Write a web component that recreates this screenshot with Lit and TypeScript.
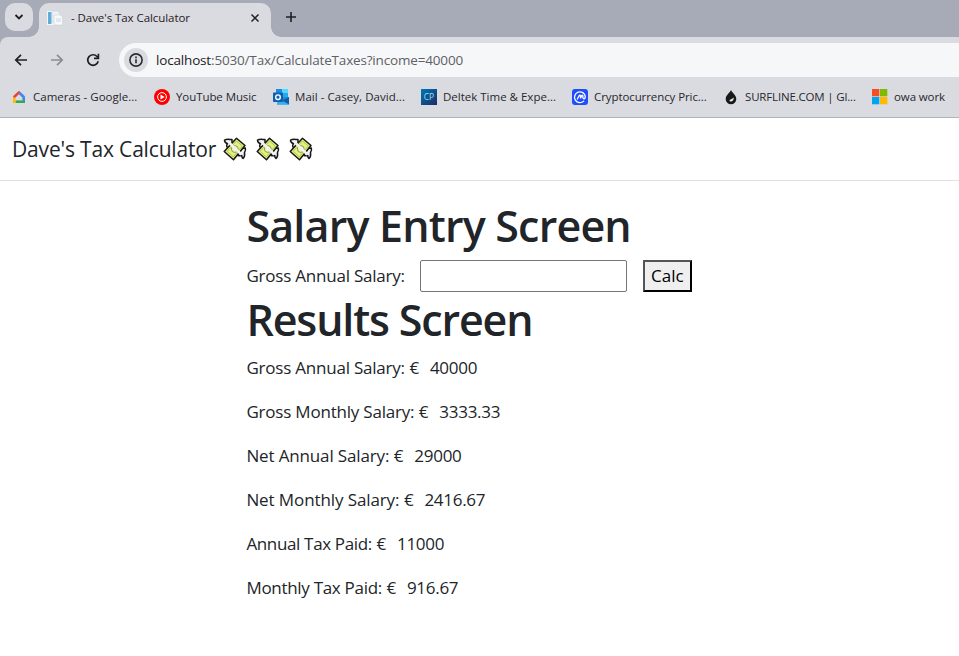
import { LitElement, html, css, svg } from "lit";
import { customElement } from "lit/decorators.js";

const google = svg`<svg width="16" height="16" viewBox="0 0 16 16" fill="none" stroke-width="2.6"><path d="M3.400 7.800 8 3.400" stroke="#ea4335" stroke-linecap="round"/><path d="M8.600 4 12.700 8V12" stroke="#4285f4" stroke-linejoin="round"/><path d="M4.500 12.700h9.500" stroke="#34a853"/><path d="M3.300 8.500V12.700h1.500" stroke="#fbbc04"/></svg>`;
const youtube = svg`<svg width="16" height="16" viewBox="0 0 16 16"><circle cx="8" cy="8" r="8" fill="#f00"/><circle cx="8" cy="8" r="4.400" fill="none" stroke="#fff" stroke-width="1"/><path d="M6.500 5.500 10.600 8l-4.100 2.500z" fill="#fff"/></svg>`;
const outlook = svg`<svg width="16" height="16" viewBox="0 0 16 16"><path d="M3 0h12v8H3z" fill="#1490df"/><path d="M9 0h6v4H9z" fill="#50d9ff"/><path d="M3 4h6v4H3z" fill="#0a5ca5"/><path d="M9 4h6v4H9z" fill="#28a8ea"/><path d="M4 8h12v7.500H4z" fill="#1a8fe0"/><path d="M16 8v7.500L9 11.500z" fill="#0f5fa8"/><path d="m4 9 12 6.500H4z" fill="#35b0f0"/><rect y="3.500" width="10" height="9.500" rx=".7" fill="#0f5fb5"/><circle cx="5" cy="8.200" r="2.300" fill="none" stroke="#fff" stroke-width="1.400"/></svg>`;
const deltek = svg`<svg width="16" height="16" viewBox="0 0 16 16"><defs><linearGradient id="g" x2="1" y2="1"><stop stop-color="#0078b4"/><stop offset="1" stop-color="#1d2a63"/></linearGradient></defs><path d="M0 0h16v16H0z" fill="url(#g)"/><text x="8" y="11.200" text-anchor="middle" font-family="Open Sans, sans-serif" font-size="8.500" fill="#9ddcf5">CP</text></svg>`;
const coin = svg`<svg width="16" height="16" viewBox="0 0 16 16"><rect width="16" height="16" rx="3" fill="#1f4dfb"/><path d="M11.700 12.100a5.400 5.400 0 1 1 1.600-4.500c.1 2.600-2.200 2.800-2.400 1V7.100c0-1-.8-1.100-1.200-.3L8.500 9.200V7c0-1-.8-1.100-1.300-.3L5.300 10" fill="none" stroke="#fff" stroke-width="1.300" stroke-linecap="round"/></svg>`;
const surf = svg`<svg width="16" height="16" viewBox="0 0 16 16"><path d="M8 1c1 2.700 5.300 5.200 5.300 9a5.300 5.300 0 0 1-10.600 0C2.700 6.200 7 3.700 8 1z" fill="#191919"/><path d="M10.700 8.200c-.2 1.600-3.800 1.600-4.300 3.600.8 1.500 4.900.4 4.300-3.600z" fill="#e6e7ea"/></svg>`;
const windows = svg`<svg width="16" height="16" viewBox="0 0 16 16"><path d="M0 0h7.300v7.300H0z" fill="#f25022"/><path d="M8 0h7.300v7.300H8z" fill="#7fba00"/><path d="M0 8h7.300v7.300H0z" fill="#00a4ef"/><path d="M8 8h7.300v7.300H8z" fill="#ffb900"/></svg>`;

const bookmarks = [
  { name: "Cameras - Google...", icon: google, width: 143, spacing: 0.03 },
  { name: "YouTube Music", icon: youtube, width: 119, spacing: -0.08 },
  { name: "Mail - Casey, David...", icon: outlook, width: 148, spacing: 0.045 },
  { name: "Deltek Time & Expe...", icon: deltek, width: 151, spacing: 0 },
  { name: "Cryptocurrency Pric...", icon: coin, width: 151, spacing: -0.09 },
  { name: "SURFLINE.COM | Gl...", icon: surf, width: 149, spacing: -0.17 },
  { name: "owa work", icon: windows, width: 80, spacing: -0.1 },
];

const results = [
  { label: "Gross Annual Salary:", value: "40000", spacing: -0.215 },
  { label: "Gross Monthly Salary:", value: "3333.33", spacing: -0.205 },
  { label: "Net Annual Salary:", value: "29000", spacing: -0.14 },
  { label: "Net Monthly Salary:", value: "2416.67", spacing: -0.1 },
  { label: "Annual Tax Paid:", value: "11000", spacing: -0.35 },
  { label: "Monthly Tax Paid:", value: "916.67", spacing: -0.3 },
];

const money = svg`<svg class="money" width="24" height="24" viewBox="0 0 24 24" stroke-linejoin="round"><path d="M1.500 3.200C3.500 1.800 6 2.500 9 2.500L9 8 5 10.500C3 10 3.500 8 4.500 6.800 2.800 6 1.500 4.800 1.500 3.200z" fill="#f4f4f4" stroke="#181818" stroke-width="1.500"/><path d="M15 18.500l4-7 3.300-.5c.5 1.500.3 3-.8 4.500.3 2-.2 4.800-1.500 6-1-.8-1.200-2-1.200-3-1.500.5-3.100.3-3.800 0z" fill="#f4f4f4" stroke="#181818" stroke-width="1.500"/><path d="M13.500 1.200 22 8.500 10.500 22.800 1.200 14.500z" fill="#e4f17c" stroke="#181818" stroke-width="1.500"/><path d="M13.500 4 19.300 9 10.300 20 4.200 14.300z" fill="none" stroke="#b5c160" stroke-width="1"/><circle cx="11.800" cy="12" r="3.400" fill="#f0f8b0" stroke="#8c9a58" stroke-width="1"/><path d="m7 6.500 11.500 11" stroke="#f3f3f3" stroke-width="2.600"/></svg>`;

@customElement("app-root")
export class AppRoot extends LitElement {
  static styles = css`
    :host { display: block; height: 656px; overflow: hidden; background: #fff; color: #212529; font-family: "Open Sans", "Noto Sans", sans-serif; }
    * { box-sizing: border-box; }
    svg { display: block; flex: none; }
    .t { white-space: pre; }
    .tabs { height: 37px; background: #a7abb7; display: flex; }
    .search { width: 28px; height: 28px; margin: 3px 6px 0 5px; border-radius: 10px; background: #dadbe0; display: grid; place-items: center; }
    .tab { position: relative; width: 232px; height: 34px; margin-top: 3px; border-radius: 10px 10px 0 0; background: #dadbe0; display: flex; align-items: center; padding: 0 10px 5px 8px; font-size: 11.500px; letter-spacing: -0.065px; color: #1f2024; }
    .tab::before, .tab::after { content: ""; position: absolute; bottom: 0; width: 10px; height: 10px; }
    .tab::before { left: -10px; background: radial-gradient(circle at 0 0, transparent 9.500px, #dadbe0 10px); }
    .tab::after { right: -10px; background: radial-gradient(circle at 100% 0, transparent 9.500px, #dadbe0 10px); }
    .title { margin-left: 8px; flex: 1; }
    .plus { margin: 11px 0 0 14px; }
    .bar { height: 46px; background: #dadbe0; display: flex; align-items: center; border-radius: 8px 0 0 0; }
    .barwrap { background: #a7abb7; }
    .nav { display: flex; gap: 20px; padding-left: 13px; width: 119px; }
    .address { flex: 1; height: 34px; border-radius: 17px 0 0 17px; background: #f6f7f9; display: flex; align-items: center; padding-left: 5px; font-size: 13.500px; letter-spacing: -0.171px; color: #5e6165; }
    .info { width: 24px; height: 24px; border-radius: 50%; background: #dadbe0; display: grid; place-items: center; margin-right: 8px; }
    .host { color: #1f2024; }
    .marks { height: 35px; background: #dadbe0; border-bottom: 1px solid #b2b3b7; display: flex; align-items: center; padding: 0 0 7px 11px; font-size: 11.500px; color: #27282c; }
    .mark { display: flex; align-items: center; gap: 6px; flex: none; }
    .brand { height: 63px; border-bottom: 1px solid #dee2e6; display: flex; align-items: center; padding: 0 0 1px 12px; font-size: 21px; letter-spacing: -0.17px; }
    .brand .t { margin-right: 7px; }
    .money { margin-right: 9px; }
    main { padding: 17.600px 0 0 246.400px; font-size: 17px; line-height: 26.400px; }
    h1 { margin: 0; padding-top: 2px; font-size: 43px; font-weight: 600; line-height: 50.800px; letter-spacing: -0.803px; white-space: pre; }
    .results { letter-spacing: -1.144px; padding-top: 3px; line-height: 49.800px; }
    .entry { margin-top: 8.800px; height: 32px; display: flex; align-items: center; }
    .label { letter-spacing: -0.215px; padding-top: 1px; }
    input { width: 207px; height: 32px; margin: 0 16px 0 15px; border: 1px solid #767676; border-radius: 2px; background: #fff; }
    button { width: 49px; height: 32px; padding: 0; border: 2px solid; border-color: #555 #000 #000 #555; background: #efefef; color: #000; font: inherit; }
    button .t { display: block; padding-top: 1px; letter-spacing: 0.1px; }
    .rows { margin-top: 9.800px; display: grid; gap: 17.600px; }
    .row { display: flex; }
    .euro { width: 20.500px; margin-left: 4.500px; }
    .value { letter-spacing: -0.28px; }
  `;

  render() {
    return html`
      <div class="tabs">
        <div class="search"><svg width="10" height="10" viewBox="0 0 10 10"><path d="m1.500 3 3.500 3.500L8.500 3" fill="none" stroke="#1f2024" stroke-width="1.800"/></svg></div>
        <div class="tab">
          <svg width="16" height="16" viewBox="0 0 16 16"><path d="M0 1h9v14H0z" fill="#f4f7fa"/><path d="M1 2h3.500v12H1z" fill="#62add6"/><path d="M5 1h6l2 3v8H5z" fill="#eef2f6" stroke="#c3ced8" stroke-width=".6"/><path d="M7 5h6.500l2 2v8H7z" fill="#f7f9fb" stroke="#c6d0d9" stroke-width=".6"/><path d="M9 9h5M9 11h5" stroke="#c3ced6" stroke-width=".8"/></svg>
          <span class="t title">- Dave's Tax Calculator</span>
          <svg width="12" height="12" viewBox="0 0 12 12"><path d="m2.500 2.500 7 7m0-7-7 7" stroke="#1f2024" stroke-width="1.500"/></svg>
        </div>
        <svg class="plus" width="12" height="12" viewBox="0 0 12 12"><path d="M6 1v10M1 6h10" stroke="#1f2024" stroke-width="1.600"/></svg>
      </div>
      <div class="barwrap"><div class="bar">
        <div class="nav">
          <svg width="16" height="16" viewBox="0 0 16 16"><path d="M14 8H3m5-5.200L2.800 8 8 13.200" fill="none" stroke="#1f2024" stroke-width="1.700"/></svg>
          <svg width="16" height="16" viewBox="0 0 16 16"><path d="M2 8h11M8 2.800 13.200 8 8 13.200" fill="none" stroke="#8b8d93" stroke-width="1.700"/></svg>
          <svg width="16" height="16" viewBox="0 0 16 16"><path d="M13.200 9.300A5.300 5.300 0 1 1 12 4.500l1.500 1.700" fill="none" stroke="#1f2024" stroke-width="1.700"/><path d="M13.400 1.800v4.500H9" fill="none" stroke="#1f2024" stroke-width="1.700"/></svg>
        </div>
        <div class="address">
          <div class="info"><svg width="16" height="16" viewBox="0 0 16 16"><circle cx="8" cy="8" r="6.100" fill="none" stroke="#2b2c30" stroke-width="1.600"/><path d="M8 7.200v4M8 4.600v1.600" stroke="#2b2c30" stroke-width="1.600"/></svg></div>
          <span class="t"><span class="host">localhost</span>:5030/Tax/CalculateTaxes?income=40000</span>
        </div>
      </div></div>
      <div class="marks">
        ${bookmarks.map((b) => html`<div class="mark" style="width:${b.width}px;letter-spacing:${b.spacing}px">${b.icon}<span class="t">${b.name}</span></div>`)}
      </div>
      <div class="brand"><span class="t">Dave's Tax Calculator</span>${money}${money}${money}</div>
      <main>
        <h1>Salary Entry Screen</h1>
        <div class="entry"><span class="t label">Gross Annual Salary:</span><input /><button><span class="t">Calc</span></button></div>
        <h1 class="results">Results Screen</h1>
        <div class="rows">
          ${results.map((r) => html`<div class="row"><span class="t" style="letter-spacing:${r.spacing}px">${r.label}</span><span class="euro">€</span><span class="t value">${r.value}</span></div>`)}
        </div>
      </main>
    `;
  }
}
